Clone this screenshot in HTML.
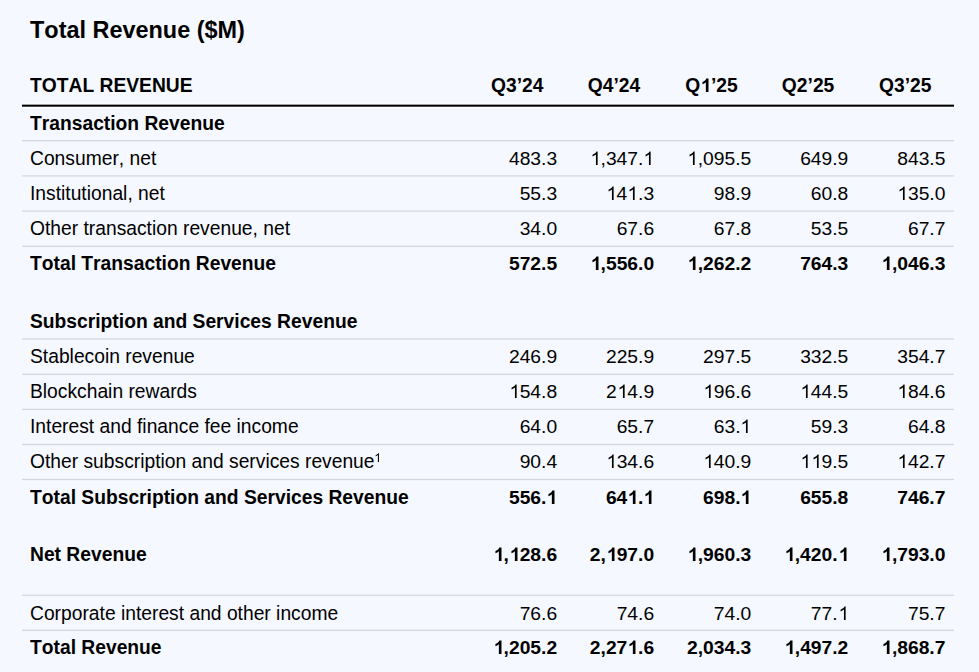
<!DOCTYPE html>
<html><head><meta charset="utf-8"><style>
html,body{margin:0;padding:0;}
body{width:979px;height:672px;background:#f5f8fe;position:relative;overflow:hidden;font-family:"Liberation Sans",sans-serif;color:#000;font-kerning:none;}
.t{position:absolute;white-space:nowrap;line-height:1;transform-origin:0 84.65%;}
.b{font-weight:bold;}
.o{position:relative;color:transparent;}
.o svg{position:absolute;left:0;top:0;width:0.5562em;height:1em;fill:#000;overflow:visible;}
sup{font-size:12.5px;position:relative;top:-0.5px;vertical-align:top;margin-left:-0.4px;line-height:1;}
</style></head><body>

<div class="t b" style="top:18.95px;font-size:23.45px;left:30.00px;">Total Revenue ($M)</div>
<div class="t b" style="top:76.20px;font-size:19.25px;transform:scaleY(1.02);left:30.00px;">TOTAL REVENUE</div>
<div class="t b" style="top:76.20px;font-size:19.25px;transform:scaleY(1.02);left:457.20px;width:120px;text-align:center;">Q3’24</div>
<div class="t b" style="top:76.20px;font-size:19.25px;transform:scaleY(1.02);left:554.00px;width:120px;text-align:center;">Q4’24</div>
<div class="t b" style="top:76.20px;font-size:19.25px;transform:scaleY(1.02);left:651.50px;width:120px;text-align:center;">Q<span class="o">1<svg viewBox="-50 -1806 1139 2048" preserveAspectRatio="none"><path transform="scale(1,-0.9559)" d="M854 0H573V1059Q419 915 210 846V1101Q320 1137 449 1237T626 1472H854Z"/></svg></span>’25</div>
<div class="t b" style="top:76.20px;font-size:19.25px;transform:scaleY(1.02);left:748.10px;width:120px;text-align:center;">Q2’25</div>
<div class="t b" style="top:76.20px;font-size:19.25px;transform:scaleY(1.02);left:845.20px;width:120px;text-align:center;">Q3’25</div>
<svg width="979" height="672" style="position:absolute;left:0;top:0"><rect x="22" y="103" width="932" height="1" fill="#f8fbff"/><rect x="22" y="107" width="932" height="1" fill="#ffffff"/><rect x="22" y="104.65" width="932" height="2.05" fill="#000"/><rect x="22" y="140.07" width="932" height="1.25" fill="#d4d7dd"/><rect x="22" y="175.28" width="932" height="1.25" fill="#d4d7dd"/><rect x="22" y="210.47" width="932" height="1.25" fill="#d4d7dd"/><rect x="22" y="245.68" width="932" height="1.25" fill="#d4d7dd"/><rect x="22" y="338.38" width="932" height="1.25" fill="#d4d7dd"/><rect x="22" y="373.68" width="932" height="1.25" fill="#d4d7dd"/><rect x="22" y="408.77" width="932" height="1.25" fill="#d4d7dd"/><rect x="22" y="443.88" width="932" height="1.25" fill="#d4d7dd"/><rect x="22" y="478.88" width="932" height="1.25" fill="#d4d7dd"/><rect x="22" y="594.67" width="932" height="1.25" fill="#d4d7dd"/><rect x="22" y="629.73" width="932" height="1.25" fill="#d4d7dd"/></svg>
<div class="t b" style="top:114.40px;font-size:19.25px;transform:scaleY(1.02);left:30.00px;">Transaction Revenue</div>
<div class="t" style="top:149.00px;font-size:19.25px;transform:scaleY(1.02);left:30.00px;">Consumer, net</div>
<div class="t" style="top:149.00px;font-size:19.25px;right:421.90px;">483.3</div>
<div class="t" style="top:149.00px;font-size:19.25px;right:324.90px;"><span class="o">1<svg viewBox="-50 -1806 1139 2048" preserveAspectRatio="none"><path transform="scale(1,-0.9750)" d="M763 0H583V1147Q518 1085 412 1023T221 930V1104Q372 1175 485 1276T645 1472H763Z"/></svg></span>,347.<span class="o">1<svg viewBox="-50 -1806 1139 2048" preserveAspectRatio="none"><path transform="scale(1,-0.9750)" d="M763 0H583V1147Q518 1085 412 1023T221 930V1104Q372 1175 485 1276T645 1472H763Z"/></svg></span></div>
<div class="t" style="top:149.00px;font-size:19.25px;right:227.80px;"><span class="o">1<svg viewBox="-50 -1806 1139 2048" preserveAspectRatio="none"><path transform="scale(1,-0.9750)" d="M763 0H583V1147Q518 1085 412 1023T221 930V1104Q372 1175 485 1276T645 1472H763Z"/></svg></span>,095.5</div>
<div class="t" style="top:149.00px;font-size:19.25px;right:130.70px;">649.9</div>
<div class="t" style="top:149.00px;font-size:19.25px;right:33.60px;">843.5</div>
<div class="t" style="top:184.17px;font-size:19.25px;transform:scaleY(1.02);left:30.00px;">Institutional, net</div>
<div class="t" style="top:184.17px;font-size:19.25px;right:421.90px;">55.3</div>
<div class="t" style="top:184.17px;font-size:19.25px;right:324.90px;"><span class="o">1<svg viewBox="-50 -1806 1139 2048" preserveAspectRatio="none"><path transform="scale(1,-0.9750)" d="M763 0H583V1147Q518 1085 412 1023T221 930V1104Q372 1175 485 1276T645 1472H763Z"/></svg></span>4<span class="o">1<svg viewBox="-50 -1806 1139 2048" preserveAspectRatio="none"><path transform="scale(1,-0.9750)" d="M763 0H583V1147Q518 1085 412 1023T221 930V1104Q372 1175 485 1276T645 1472H763Z"/></svg></span>.3</div>
<div class="t" style="top:184.17px;font-size:19.25px;right:227.80px;">98.9</div>
<div class="t" style="top:184.17px;font-size:19.25px;right:130.70px;">60.8</div>
<div class="t" style="top:184.17px;font-size:19.25px;right:33.60px;"><span class="o">1<svg viewBox="-50 -1806 1139 2048" preserveAspectRatio="none"><path transform="scale(1,-0.9750)" d="M763 0H583V1147Q518 1085 412 1023T221 930V1104Q372 1175 485 1276T645 1472H763Z"/></svg></span>35.0</div>
<div class="t" style="top:219.34px;font-size:19.25px;transform:scaleY(1.02);left:30.00px;">Other transaction revenue, net</div>
<div class="t" style="top:219.34px;font-size:19.25px;right:421.90px;">34.0</div>
<div class="t" style="top:219.34px;font-size:19.25px;right:324.90px;">67.6</div>
<div class="t" style="top:219.34px;font-size:19.25px;right:227.80px;">67.8</div>
<div class="t" style="top:219.34px;font-size:19.25px;right:130.70px;">53.5</div>
<div class="t" style="top:219.34px;font-size:19.25px;right:33.60px;">67.7</div>
<div class="t b" style="top:254.10px;font-size:19.25px;transform:scaleY(1.02);left:30.00px;">Total Transaction Revenue</div>
<div class="t b" style="top:254.10px;font-size:19.25px;right:421.90px;">572.5</div>
<div class="t b" style="top:254.10px;font-size:19.25px;right:324.90px;"><span class="o">1<svg viewBox="-50 -1806 1139 2048" preserveAspectRatio="none"><path transform="scale(1,-0.9750)" d="M854 0H573V1059Q419 915 210 846V1101Q320 1137 449 1237T626 1472H854Z"/></svg></span>,556.0</div>
<div class="t b" style="top:254.10px;font-size:19.25px;right:227.80px;"><span class="o">1<svg viewBox="-50 -1806 1139 2048" preserveAspectRatio="none"><path transform="scale(1,-0.9750)" d="M854 0H573V1059Q419 915 210 846V1101Q320 1137 449 1237T626 1472H854Z"/></svg></span>,262.2</div>
<div class="t b" style="top:254.10px;font-size:19.25px;right:130.70px;">764.3</div>
<div class="t b" style="top:254.10px;font-size:19.25px;right:33.60px;"><span class="o">1<svg viewBox="-50 -1806 1139 2048" preserveAspectRatio="none"><path transform="scale(1,-0.9750)" d="M854 0H573V1059Q419 915 210 846V1101Q320 1137 449 1237T626 1472H854Z"/></svg></span>,046.3</div>
<div class="t b" style="top:311.90px;font-size:19.25px;transform:scaleY(1.02);left:30.00px;">Subscription and Services Revenue</div>
<div class="t" style="top:347.20px;font-size:19.25px;transform:scaleY(1.02);left:30.00px;">Stablecoin revenue</div>
<div class="t" style="top:347.20px;font-size:19.25px;right:421.90px;">246.9</div>
<div class="t" style="top:347.20px;font-size:19.25px;right:324.90px;">225.9</div>
<div class="t" style="top:347.20px;font-size:19.25px;right:227.80px;">297.5</div>
<div class="t" style="top:347.20px;font-size:19.25px;right:130.70px;">332.5</div>
<div class="t" style="top:347.20px;font-size:19.25px;right:33.60px;">354.7</div>
<div class="t" style="top:382.37px;font-size:19.25px;transform:scaleY(1.02);left:30.00px;">Blockchain rewards</div>
<div class="t" style="top:382.37px;font-size:19.25px;right:421.90px;"><span class="o">1<svg viewBox="-50 -1806 1139 2048" preserveAspectRatio="none"><path transform="scale(1,-0.9750)" d="M763 0H583V1147Q518 1085 412 1023T221 930V1104Q372 1175 485 1276T645 1472H763Z"/></svg></span>54.8</div>
<div class="t" style="top:382.37px;font-size:19.25px;right:324.90px;">2<span class="o">1<svg viewBox="-50 -1806 1139 2048" preserveAspectRatio="none"><path transform="scale(1,-0.9750)" d="M763 0H583V1147Q518 1085 412 1023T221 930V1104Q372 1175 485 1276T645 1472H763Z"/></svg></span>4.9</div>
<div class="t" style="top:382.37px;font-size:19.25px;right:227.80px;"><span class="o">1<svg viewBox="-50 -1806 1139 2048" preserveAspectRatio="none"><path transform="scale(1,-0.9750)" d="M763 0H583V1147Q518 1085 412 1023T221 930V1104Q372 1175 485 1276T645 1472H763Z"/></svg></span>96.6</div>
<div class="t" style="top:382.37px;font-size:19.25px;right:130.70px;"><span class="o">1<svg viewBox="-50 -1806 1139 2048" preserveAspectRatio="none"><path transform="scale(1,-0.9750)" d="M763 0H583V1147Q518 1085 412 1023T221 930V1104Q372 1175 485 1276T645 1472H763Z"/></svg></span>44.5</div>
<div class="t" style="top:382.37px;font-size:19.25px;right:33.60px;"><span class="o">1<svg viewBox="-50 -1806 1139 2048" preserveAspectRatio="none"><path transform="scale(1,-0.9750)" d="M763 0H583V1147Q518 1085 412 1023T221 930V1104Q372 1175 485 1276T645 1472H763Z"/></svg></span>84.6</div>
<div class="t" style="top:417.00px;font-size:19.25px;transform:scaleY(1.02);left:30.00px;">Interest and finance fee income</div>
<div class="t" style="top:417.00px;font-size:19.25px;right:421.90px;">64.0</div>
<div class="t" style="top:417.00px;font-size:19.25px;right:324.90px;">65.7</div>
<div class="t" style="top:417.00px;font-size:19.25px;right:227.80px;">63.<span class="o">1<svg viewBox="-50 -1806 1139 2048" preserveAspectRatio="none"><path transform="scale(1,-0.9750)" d="M763 0H583V1147Q518 1085 412 1023T221 930V1104Q372 1175 485 1276T645 1472H763Z"/></svg></span></div>
<div class="t" style="top:417.00px;font-size:19.25px;right:130.70px;">59.3</div>
<div class="t" style="top:417.00px;font-size:19.25px;right:33.60px;">64.8</div>
<div class="t" style="top:452.20px;font-size:19.25px;transform:scaleY(1.02);left:30.00px;">Other subscription and services revenue<sup><span class="o">1<svg viewBox="-50 -1806 1139 2048" preserveAspectRatio="none"><path transform="scale(1,-0.9559)" d="M763 0H583V1147Q518 1085 412 1023T221 930V1104Q372 1175 485 1276T645 1472H763Z"/></svg></span></sup></div>
<div class="t" style="top:452.20px;font-size:19.25px;right:421.90px;">90.4</div>
<div class="t" style="top:452.20px;font-size:19.25px;right:324.90px;"><span class="o">1<svg viewBox="-50 -1806 1139 2048" preserveAspectRatio="none"><path transform="scale(1,-0.9750)" d="M763 0H583V1147Q518 1085 412 1023T221 930V1104Q372 1175 485 1276T645 1472H763Z"/></svg></span>34.6</div>
<div class="t" style="top:452.20px;font-size:19.25px;right:227.80px;"><span class="o">1<svg viewBox="-50 -1806 1139 2048" preserveAspectRatio="none"><path transform="scale(1,-0.9750)" d="M763 0H583V1147Q518 1085 412 1023T221 930V1104Q372 1175 485 1276T645 1472H763Z"/></svg></span>40.9</div>
<div class="t" style="top:452.20px;font-size:19.25px;right:130.70px;"><span class="o">1<svg viewBox="-50 -1806 1139 2048" preserveAspectRatio="none"><path transform="scale(1,-0.9750)" d="M763 0H583V1147Q518 1085 412 1023T221 930V1104Q372 1175 485 1276T645 1472H763Z"/></svg></span><span class="o">1<svg viewBox="-50 -1806 1139 2048" preserveAspectRatio="none"><path transform="scale(1,-0.9750)" d="M763 0H583V1147Q518 1085 412 1023T221 930V1104Q372 1175 485 1276T645 1472H763Z"/></svg></span>9.5</div>
<div class="t" style="top:452.20px;font-size:19.25px;right:33.60px;"><span class="o">1<svg viewBox="-50 -1806 1139 2048" preserveAspectRatio="none"><path transform="scale(1,-0.9750)" d="M763 0H583V1147Q518 1085 412 1023T221 930V1104Q372 1175 485 1276T645 1472H763Z"/></svg></span>42.7</div>
<div class="t b" style="top:488.30px;font-size:19.25px;transform:scaleY(1.02);left:30.00px;">Total Subscription and Services Revenue</div>
<div class="t b" style="top:488.30px;font-size:19.25px;right:421.90px;">556.<span class="o">1<svg viewBox="-50 -1806 1139 2048" preserveAspectRatio="none"><path transform="scale(1,-0.9750)" d="M854 0H573V1059Q419 915 210 846V1101Q320 1137 449 1237T626 1472H854Z"/></svg></span></div>
<div class="t b" style="top:488.30px;font-size:19.25px;right:324.90px;">64<span class="o">1<svg viewBox="-50 -1806 1139 2048" preserveAspectRatio="none"><path transform="scale(1,-0.9750)" d="M854 0H573V1059Q419 915 210 846V1101Q320 1137 449 1237T626 1472H854Z"/></svg></span>.<span class="o">1<svg viewBox="-50 -1806 1139 2048" preserveAspectRatio="none"><path transform="scale(1,-0.9750)" d="M854 0H573V1059Q419 915 210 846V1101Q320 1137 449 1237T626 1472H854Z"/></svg></span></div>
<div class="t b" style="top:488.30px;font-size:19.25px;right:227.80px;">698.<span class="o">1<svg viewBox="-50 -1806 1139 2048" preserveAspectRatio="none"><path transform="scale(1,-0.9750)" d="M854 0H573V1059Q419 915 210 846V1101Q320 1137 449 1237T626 1472H854Z"/></svg></span></div>
<div class="t b" style="top:488.30px;font-size:19.25px;right:130.70px;">655.8</div>
<div class="t b" style="top:488.30px;font-size:19.25px;right:33.60px;">746.7</div>
<div class="t b" style="top:545.30px;font-size:19.25px;transform:scaleY(1.02);left:30.00px;">Net Revenue</div>
<div class="t b" style="top:545.30px;font-size:19.25px;right:421.90px;"><span class="o">1<svg viewBox="-50 -1806 1139 2048" preserveAspectRatio="none"><path transform="scale(1,-0.9750)" d="M854 0H573V1059Q419 915 210 846V1101Q320 1137 449 1237T626 1472H854Z"/></svg></span>,<span class="o">1<svg viewBox="-50 -1806 1139 2048" preserveAspectRatio="none"><path transform="scale(1,-0.9750)" d="M854 0H573V1059Q419 915 210 846V1101Q320 1137 449 1237T626 1472H854Z"/></svg></span>28.6</div>
<div class="t b" style="top:545.30px;font-size:19.25px;right:324.90px;">2,<span class="o">1<svg viewBox="-50 -1806 1139 2048" preserveAspectRatio="none"><path transform="scale(1,-0.9750)" d="M854 0H573V1059Q419 915 210 846V1101Q320 1137 449 1237T626 1472H854Z"/></svg></span>97.0</div>
<div class="t b" style="top:545.30px;font-size:19.25px;right:227.80px;"><span class="o">1<svg viewBox="-50 -1806 1139 2048" preserveAspectRatio="none"><path transform="scale(1,-0.9750)" d="M854 0H573V1059Q419 915 210 846V1101Q320 1137 449 1237T626 1472H854Z"/></svg></span>,960.3</div>
<div class="t b" style="top:545.30px;font-size:19.25px;right:130.70px;"><span class="o">1<svg viewBox="-50 -1806 1139 2048" preserveAspectRatio="none"><path transform="scale(1,-0.9750)" d="M854 0H573V1059Q419 915 210 846V1101Q320 1137 449 1237T626 1472H854Z"/></svg></span>,420.<span class="o">1<svg viewBox="-50 -1806 1139 2048" preserveAspectRatio="none"><path transform="scale(1,-0.9750)" d="M854 0H573V1059Q419 915 210 846V1101Q320 1137 449 1237T626 1472H854Z"/></svg></span></div>
<div class="t b" style="top:545.30px;font-size:19.25px;right:33.60px;"><span class="o">1<svg viewBox="-50 -1806 1139 2048" preserveAspectRatio="none"><path transform="scale(1,-0.9750)" d="M854 0H573V1059Q419 915 210 846V1101Q320 1137 449 1237T626 1472H854Z"/></svg></span>,793.0</div>
<div class="t" style="top:603.50px;font-size:19.25px;transform:scaleY(1.02);left:30.00px;">Corporate interest and other income</div>
<div class="t" style="top:603.50px;font-size:19.25px;right:421.90px;">76.6</div>
<div class="t" style="top:603.50px;font-size:19.25px;right:324.90px;">74.6</div>
<div class="t" style="top:603.50px;font-size:19.25px;right:227.80px;">74.0</div>
<div class="t" style="top:603.50px;font-size:19.25px;right:130.70px;">77.<span class="o">1<svg viewBox="-50 -1806 1139 2048" preserveAspectRatio="none"><path transform="scale(1,-0.9750)" d="M763 0H583V1147Q518 1085 412 1023T221 930V1104Q372 1175 485 1276T645 1472H763Z"/></svg></span></div>
<div class="t" style="top:603.50px;font-size:19.25px;right:33.60px;">75.7</div>
<div class="t b" style="top:638.30px;font-size:19.25px;transform:scaleY(1.02);left:30.00px;">Total Revenue</div>
<div class="t b" style="top:638.30px;font-size:19.25px;right:421.90px;"><span class="o">1<svg viewBox="-50 -1806 1139 2048" preserveAspectRatio="none"><path transform="scale(1,-0.9750)" d="M854 0H573V1059Q419 915 210 846V1101Q320 1137 449 1237T626 1472H854Z"/></svg></span>,205.2</div>
<div class="t b" style="top:638.30px;font-size:19.25px;right:324.90px;">2,27<span class="o">1<svg viewBox="-50 -1806 1139 2048" preserveAspectRatio="none"><path transform="scale(1,-0.9750)" d="M854 0H573V1059Q419 915 210 846V1101Q320 1137 449 1237T626 1472H854Z"/></svg></span>.6</div>
<div class="t b" style="top:638.30px;font-size:19.25px;right:227.80px;">2,034.3</div>
<div class="t b" style="top:638.30px;font-size:19.25px;right:130.70px;"><span class="o">1<svg viewBox="-50 -1806 1139 2048" preserveAspectRatio="none"><path transform="scale(1,-0.9750)" d="M854 0H573V1059Q419 915 210 846V1101Q320 1137 449 1237T626 1472H854Z"/></svg></span>,497.2</div>
<div class="t b" style="top:638.30px;font-size:19.25px;right:33.60px;"><span class="o">1<svg viewBox="-50 -1806 1139 2048" preserveAspectRatio="none"><path transform="scale(1,-0.9750)" d="M854 0H573V1059Q419 915 210 846V1101Q320 1137 449 1237T626 1472H854Z"/></svg></span>,868.7</div>
</body></html>
